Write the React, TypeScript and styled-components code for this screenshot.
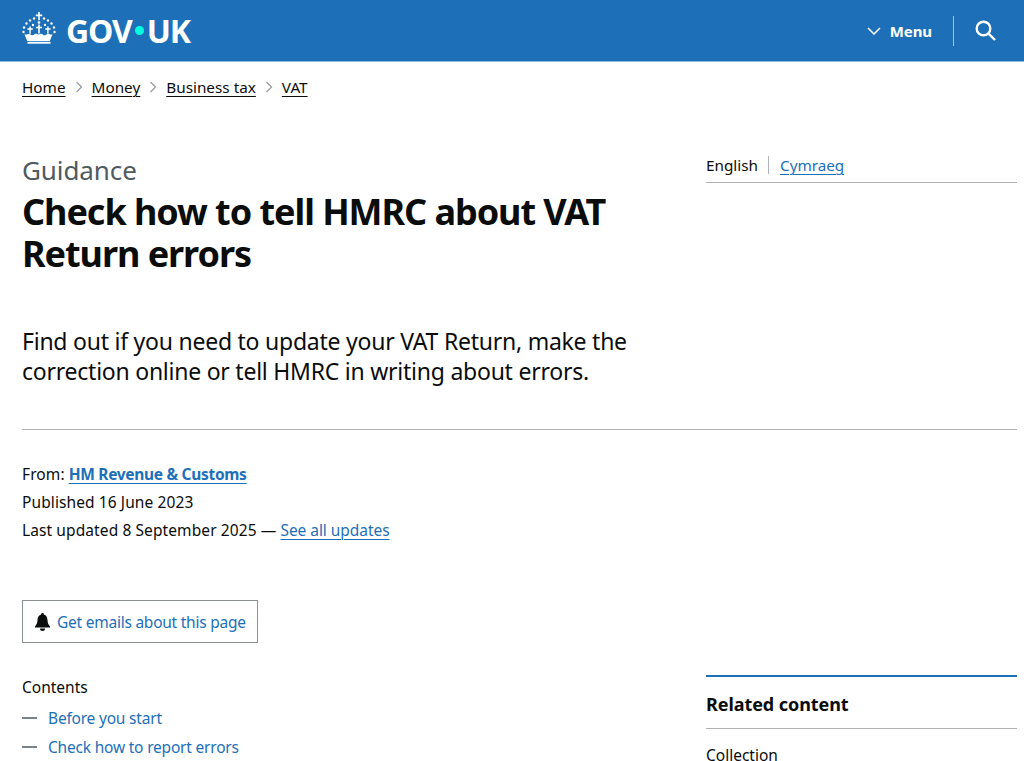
import React from 'react';
import styled, { createGlobalStyle } from 'styled-components';

const GlobalStyle = createGlobalStyle`
  html, body {
    margin: 0;
    padding: 0;
    height: 761px;
    overflow: hidden;
    background: #fff;
  }
  body {
    font-family: "Noto Sans", "Open Sans", Arial, sans-serif;
    color: #0b0c0c;
  }
`;

const Header = styled.header`
  height: 61px;
  background: #1d70b8;
  border-bottom: 1px solid #8fb8dc;
  display: flex;
  align-items: center;
  justify-content: space-between;
  padding: 0 28px 0 22px;
`;

const Logo = styled.div`
  display: flex;
  align-items: center;
  color: #fff;
  font-weight: 700;
  font-size: 32px;
  letter-spacing: -1.1px;
  gap: 10px;
`;

const CrownMark = styled.svg`
  margin-bottom: 6px;
`;

const Wordmark = styled.span`
  display: flex;
  align-items: center;
  gap: 3px;
`;

const Dot = styled.i`
  width: 9px;
  height: 9px;
  border-radius: 50%;
  background: #00ffe0;
`;

const HeaderNav = styled.nav`
  display: flex;
  align-items: center;
  color: #fff;
`;

const MenuButton = styled.div`
  display: flex;
  align-items: center;
  gap: 9px;
  font-weight: 700;
  font-size: 15px;
  letter-spacing: -0.1px;
  padding-right: 21px;
`;

const SearchButton = styled.div`
  display: flex;
  align-items: center;
  height: 30px;
  padding-left: 21px;
  border-left: 1px solid #a5c6e3;
`;

const Breadcrumbs = styled.nav`
  display: flex;
  align-items: center;
  height: 20px;
  padding: 15px 22px 0;
  font-size: 15.3px;
`;

const Crumb = styled.a`
  color: #0b0c0c;
  text-decoration: underline;
  text-underline-offset: 3px;
  text-decoration-thickness: 1px;
`;

const Chevron = styled.svg`
  margin: 0 9px;
`;

const Columns = styled.div`
  display: grid;
  grid-template-columns: 638px 311px;
  column-gap: 46px;
  padding: 0 7px 0 22px;
`;

const TitleBlock = styled.div`
  padding-top: 54px;
`;

const Caption = styled.div`
  font-size: 26px;
  line-height: 38px;
  color: #505a5f;
  letter-spacing: -0.1px;
`;

const Title = styled.h1`
  margin: 2px 0 0;
  font-size: 36px;
  line-height: 42px;
  font-weight: 700;
  letter-spacing: -1.05px;
  width: 620px;
`;

const Languages = styled.div`
  margin-top: 58px;
  padding-bottom: 7px;
  border-bottom: 1px solid #b1b4b6;
  display: flex;
  align-items: center;
  font-size: 15.3px;
  line-height: 20px;
  height: 20px;
`;

const LangCurrent = styled.span`
  padding-right: 10px;
  border-right: 1px solid #b1b4b6;
  height: 18px;
  line-height: 18px;
`;

const TextLink = styled.a<{ $bold?: boolean }>`
  color: #1d70b8;
  text-decoration: underline;
  text-underline-offset: 3px;
  text-decoration-thickness: 1px;
  font-weight: ${p => (p.$bold ? 700 : 400)};
  letter-spacing: ${p => (p.$bold ? '-0.3px' : '-0.05px')};
`;

const LangLink = styled(TextLink)`
  margin-left: 11px;
`;

const Lead = styled.p`
  margin: 51px 0 0 22px;
  width: 620px;
  font-size: 23px;
  line-height: 30px;
  letter-spacing: -0.24px;
`;

const Rule = styled.hr`
  margin: 43px 7px 0 22px;
  border: 0;
  border-top: 1px solid #b1b4b6;
`;

const Meta = styled.div`
  margin: 30px 0 0 22px;
  font-size: 15.5px;
  line-height: 28px;
  letter-spacing: 0.1px;
`;

const MetaRow = styled.div`
  display: flex;
  gap: 4px;
`;

const EmailButton = styled.a`
  display: flex;
  align-items: center;
  gap: 7px;
  box-sizing: border-box;
  width: 236px;
  height: 43px;
  margin: 56px 0 0 22px;
  padding-left: 12px;
  border: 1px solid #8a8f92;
  color: #1d70b8;
  font-size: 15.5px;
  letter-spacing: -0.24px;
`;

const LowerColumns = styled(Columns)`
  margin-top: 32px;
`;

const ContentsTitle = styled.div`
  font-size: 15.5px;
  line-height: 22px;
  margin-top: 1px;
`;

const ContentsList = styled.ul`
  list-style: none;
  margin: 5px 0 0;
  padding: 0;
`;

const ContentsItem = styled.li`
  display: flex;
  align-items: center;
  height: 29px;
  gap: 11px;
  font-size: 15.5px;
  letter-spacing: -0.2px;
  color: #1d70b8;
  &::before {
    content: "";
    width: 15px;
    height: 2px;
    background: #7a8388;
  }
`;

const Related = styled.aside`
  border-top: 2px solid #1d70b8;
  font-size: 15.5px;
`;

const RelatedTitle = styled.h2`
  margin: 0;
  height: 52px;
  box-sizing: border-box;
  padding-top: 13px;
  font-size: 18px;
  line-height: 28px;
  letter-spacing: -0.07px;
  font-weight: 700;
  border-bottom: 1px solid #b1b4b6;
`;

const RelatedLabel = styled.div`
  margin-top: 15px;
  line-height: 22px;
`;

const Crown = () => (
  <CrownMark width="34" height="32" viewBox="0 0 34 32" fill="#fff" aria-hidden="true">
    <path d="M16.200 0h1.600v2.600h2.400v1.600h-2.400v4h-1.600v-4h-2.400V2.600h2.400z" />
    <circle cx="17" cy="10.500" r="1.300" />
    <circle cx="12" cy="6.500" r="1.200" />
    <circle cx="22" cy="6.500" r="1.200" />
    <circle cx="8" cy="8.500" r="1.200" />
    <circle cx="26" cy="8.500" r="1.200" />
    <circle cx="4.500" cy="11.500" r="1.200" />
    <circle cx="29.500" cy="11.500" r="1.200" />
    <circle cx="2" cy="15.500" r="1.200" />
    <circle cx="32" cy="15.500" r="1.200" />
    <circle cx="1.500" cy="20" r="1.200" />
    <circle cx="32.500" cy="20" r="1.200" />
    <circle cx="11" cy="13" r="1.200" />
    <circle cx="23" cy="13" r="1.200" />
    <path d="M16.200 12.500h1.600v2.200h2.200v1.500h-2.200v5.300h-1.600v-5.300H14v-1.500h2.200z" />
    <path d="M7.400 14.500h1.400v1.800h2v1.400h-2v4H7.400v-4h-2v-1.400h2z" />
    <path d="M25.200 14.500h1.400v1.800h2v1.400h-2v4h-1.400v-4h-2v-1.400h2z" />
    <path d="M2.500 22.500c2 .4 3-.6 4.500-.6 1.800 0 2.200 1.400 3.600 1.400 1.600 0 1.800-1.600 3.200-1.600 1 0 1.600.7 2.700.7s1.700-.7 2.700-.7c1.400 0 1.600 1.600 3.200 1.600 1.400 0 1.800-1.400 3.600-1.400 1.500 0 2.500 1 4.500.6-1 2.200-2 4.200-2.600 6.500H5.100C4.500 26.700 3.500 24.700 2.500 22.500z" />
    <path d="M5.500 29.800h23v1.900h-23z" />
  </CrownMark>
);

const Bell = () => (
  <svg width="15" height="18" viewBox="0 0 15 18" fill="#0b0c0c" aria-hidden="true">
    <path d="M7.500 0a1.300 1.300 0 0 1 1.300 1.500C11.300 2.100 12.400 4.200 12.500 7c.1 3 .9 4.600 2.500 6.500v1H0v-1C1.600 11.600 2.400 10 2.500 7c.1-2.800 1.200-4.900 3.700-5.500A1.300 1.300 0 0 1 7.500 0z" />
    <path d="M5 15.500h5a2.500 2.500 0 0 1-5 0z" />
  </svg>
);

const Sep = () => (
  <Chevron width="8" height="12" viewBox="0 0 8 12" fill="none" stroke="#9a9ea1" strokeWidth="1.300" aria-hidden="true">
    <path d="M1.500 1l5 5-5 5" />
  </Chevron>
);

export default function App() {
  return (
    <>
      <GlobalStyle />
      <Header>
        <Logo>
          <Crown />
          <Wordmark>GOV<Dot />UK</Wordmark>
        </Logo>
        <HeaderNav>
          <MenuButton>
            <svg width="14" height="8" viewBox="0 0 14 8" fill="none" stroke="#fff" strokeWidth="1.500" aria-hidden="true">
              <path d="M1 1l6 6 6-6" />
            </svg>
            Menu
          </MenuButton>
          <SearchButton>
            <svg width="21" height="21" viewBox="0 0 21 21" fill="none" stroke="#fff" strokeWidth="2.400" aria-hidden="true">
              <circle cx="8.500" cy="8.500" r="6.800" />
              <path d="M13.300 13.300L20 20" />
            </svg>
          </SearchButton>
        </HeaderNav>
      </Header>
      <Breadcrumbs>
        <Crumb>Home</Crumb><Sep />
        <Crumb>Money</Crumb><Sep />
        <Crumb>Business tax</Crumb><Sep />
        <Crumb>VAT</Crumb>
      </Breadcrumbs>
      <Columns>
        <TitleBlock>
          <Caption>Guidance</Caption>
          <Title>Check how to tell HMRC about VAT Return errors</Title>
        </TitleBlock>
        <Languages>
          <LangCurrent>English</LangCurrent>
          <LangLink>Cymraeg</LangLink>
        </Languages>
      </Columns>
      <Lead>Find out if you need to update your VAT Return, make the correction online or tell HMRC in writing about errors.</Lead>
      <Rule />
      <Meta>
        <MetaRow>From: <TextLink $bold>HM Revenue &amp; Customs</TextLink></MetaRow>
        <MetaRow>Published 16 June 2023</MetaRow>
        <MetaRow>Last updated 8 September 2025 — <TextLink>See all updates</TextLink></MetaRow>
      </Meta>
      <EmailButton><Bell />Get emails about this page</EmailButton>
      <LowerColumns>
        <div>
          <ContentsTitle>Contents</ContentsTitle>
          <ContentsList>
            <ContentsItem>Before you start</ContentsItem>
            <ContentsItem>Check how to report errors</ContentsItem>
          </ContentsList>
        </div>
        <Related>
          <RelatedTitle>Related content</RelatedTitle>
          <RelatedLabel>Collection</RelatedLabel>
        </Related>
      </LowerColumns>
    </>
  );
}
